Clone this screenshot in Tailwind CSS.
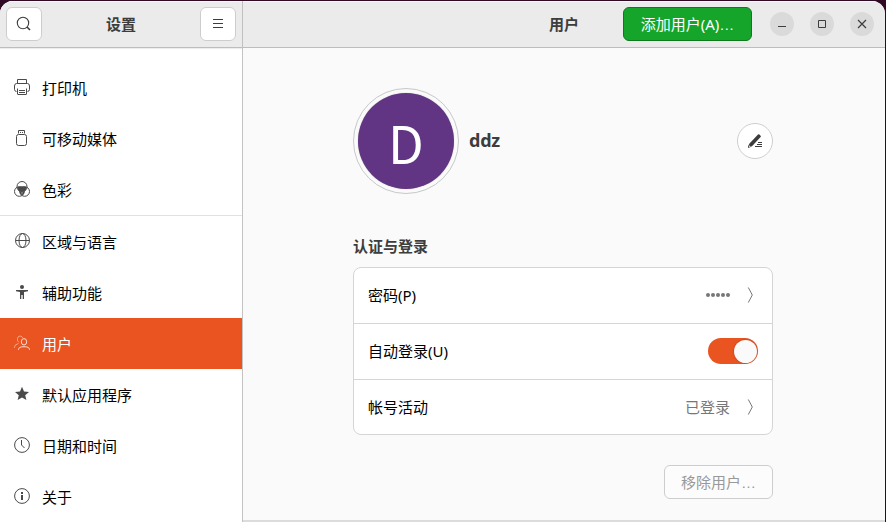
<!DOCTYPE html>
<html lang="zh-CN">
<head>
<meta charset="utf-8">
<title>设置</title>
<script src="https://cdn.jsdelivr.net/npm/@tailwindcss/browser@4"></script>
</head>
<body class="w-[886px] h-[522px] overflow-hidden bg-[#300a24] pt-px font-['Noto_Sans','Noto_Sans_CJK_SC',sans-serif] text-[15px] leading-[22px] text-black">
<div class="flex w-[885px] h-[521px] overflow-hidden rounded-t-[13px] bg-[#fafafa]">
  <aside class="flex w-[243px] shrink-0 flex-col border-r border-[#c3c3c3] bg-white">
    <header class="flex h-[47px] shrink-0 items-center justify-between border-b border-[#bdbdbd] bg-[#ebebeb] px-1.5 shadow-[inset_0_1px_0_#f8f8f8,0_1px_1px_#00000012]">
      <button class="flex h-[34px] w-9 items-center justify-center rounded-md border border-[#cdcdcd] bg-white">
        <svg width="16" height="16" viewBox="0 0 16 16" fill="none" stroke="#3d3d3d" stroke-width="1.1"><circle cx="7" cy="7" r="5.7"/><path d="M11 11l3 3" stroke-width="1.6"/></svg>
      </button>
      <h1 class="font-bold text-[#3d3d3d]">设置</h1>
      <button class="flex h-[34px] w-9 items-center justify-center rounded-md border border-[#cdcdcd] bg-white">
        <svg width="16" height="16" viewBox="0 0 16 16" stroke="#3d3d3d"><path d="M3 3.5h10M3 7.5h10M3 11.5h10"/></svg>
      </button>
    </header>
    <nav class="flex flex-col pt-3.5">
      <a class="flex h-[51px] items-center gap-3 px-3.5">
        <svg class="-mt-0.5" width="16" height="16" viewBox="0 0 16 16" fill="none" stroke="#4a4a4a"><path d="M3.500 4V.5h9V4M2.500 12.500Q.5 12.300 .5 10.500v-3.500Q.5 4.500 2.500 4.500h11q2 0 2 2.500v3.500q0 1.800-2 2M3.500 9.500v5.500q0 .5.5.5h8q.5 0 .5-.5V9.500M5 11.500h6M5 13.500h6"/></svg>
        <span>打印机</span></a>
      <a class="flex h-[51px] items-center gap-3 px-3.5">
        <svg class="-mt-0.5" width="16" height="16" viewBox="0 0 16 16" fill="none" stroke="#4a4a4a"><path d="M4.500 3.500v-3h6v3M6.500 2v1M8.500 2v1"/><rect x="2.500" y="4.500" width="10" height="11" rx="2"/></svg>
        <span>可移动媒体</span></a>
      <a class="flex h-[51px] items-center gap-3 px-3.5">
        <svg class="-mt-0.5" width="16" height="16" viewBox="0 0 16 16" fill="none" stroke="#4a4a4a"><path fill="#4a4a4a" stroke="none" d="M3.300 6.200Q8 4.500 12.700 6.200Q12.700 9 10.800 10.500Q10.500 13.500 8 14.500Q5.500 13.500 5.200 10.500Q3.300 9 3.300 6.200z"/><path d="M8 11v3M5.500 10L8 11l2.500-1" stroke="#aaa" stroke-width=".7"/><circle cx="8" cy="5.500" r="5"/><circle cx="5.300" cy="10.500" r="4.800"/><circle cx="10.700" cy="10.500" r="4.800"/></svg>
        <span>色彩</span></a>
      <hr class="border-[#e1e1e1]">
      <a class="flex h-[51px] items-center gap-3 px-3.5">
        <svg class="-mt-0.5" width="16" height="16" viewBox="0 0 16 16" fill="none" stroke="#4a4a4a"><circle cx="8.500" cy="7.500" r="7"/><ellipse cx="8.500" cy="7.500" rx="3.500" ry="7"/><path d="M1.500 7.500h14"/></svg>
        <span>区域与语言</span></a>
      <a class="flex h-[51px] items-center gap-3 px-3.5">
        <svg class="-mt-0.5" width="16" height="16" viewBox="0 0 16 16" fill="#4a4a4a"><circle cx="8" cy="3" r="2"/><path d="M2 6h12v1.200l-4 .8V15H8.700v-4H7.300v4H6V8l-4-.8z"/></svg>
        <span>辅助功能</span></a>
      <a class="flex h-[51px] items-center gap-3 bg-[#e95420] px-3.5 text-white">
        <svg class="-mt-0.5" width="16" height="16" viewBox="0 0 16 16" fill="none" stroke="#fff"><g opacity=".45"><path d="M4.700 7.300Q3 6 3.500 3.500Q4 1 6 1t2.800 2M.500 13v-1q0-2.500 4-3.500"/></g><g opacity=".8"><ellipse cx="10" cy="6.800" rx="2.700" ry="3.200"/><path d="M4.500 15v-.5q0-2.800 5.500-2.800t5.500 2.800v.5"/></g></svg>
        <span>用户</span></a>
      <a class="flex h-[51px] items-center gap-3 px-3.5">
        <svg class="-mt-0.5" width="16" height="16" viewBox="0 0 16 16" fill="#4a4a4a"><path d="M8 .8l2 4.700 5 .4-3.800 3.300L12.400 14 8 11.400 3.600 14l1.200-4.800L1 5.900l5-.4z"/></svg>
        <span>默认应用程序</span></a>
      <a class="flex h-[51px] items-center gap-3 px-3.5">
        <svg class="-mt-0.5" width="16" height="16" viewBox="0 0 16 16" fill="none" stroke="#4a4a4a"><circle cx="8" cy="8" r="7.400"/><path d="M7.500 3v5l3 3"/></svg>
        <span>日期和时间</span></a>
      <a class="flex h-[51px] items-center gap-3 px-3.5">
        <svg class="-mt-0.5" width="16" height="16" viewBox="0 0 16 16" fill="none" stroke="#4a4a4a"><circle cx="8" cy="8" r="7.400"/><path fill="#4a4a4a" stroke="none" d="M7 4h2v2H7zM7 7h2v5H7z"/></svg>
        <span>关于</span></a>
    </nav>
  </aside>

  <main class="flex flex-1 flex-col">
    <header class="flex h-[47px] shrink-0 items-center border-b border-[#bdbdbd] bg-[#ebebeb] pr-[11px] shadow-[inset_0_1px_0_#f8f8f8]">
      <h2 class="ml-[306px] w-[74px] font-bold text-[#3d3d3d]">用户</h2>
      <button class="h-[34px] w-[129px] rounded-md border border-[#0f7a1d] bg-[#15a52a] text-white">添加用户(A)<span class="font-['Liberation_Sans']">…</span></button>
      <div class="ml-auto flex gap-4">
        <button class="flex size-6 items-center justify-center rounded-full bg-[#dadada]"><svg width="16" height="16" viewBox="0 0 16 16" stroke="#3d3d3d"><path d="M4 10.500h8"/></svg></button>
        <button class="flex size-6 items-center justify-center rounded-full bg-[#dadada]"><svg width="16" height="16" viewBox="0 0 16 16" fill="none" stroke="#3d3d3d"><path d="M4.500 4.500h7v7h-7z"/></svg></button>
        <button class="flex size-6 items-center justify-center rounded-full bg-[#dadada]"><svg width="16" height="16" viewBox="0 0 16 16" stroke="#3d3d3d" stroke-width="1.200"><path d="M4 4l8 8M12 4l-8 8"/></svg></button>
      </div>
    </header>
    <div class="ml-[110px] flex w-[420px] flex-1 flex-col pt-10">
      <section class="flex items-center">
        <div class="flex size-[106px] items-center justify-center rounded-full border border-[#c8c8c8] bg-[#fafafa]">
          <div class="flex size-[96px] items-center justify-center rounded-full bg-[#613583] pt-0.5 font-['Noto_Sans_CJK_SC'] text-[52px] leading-none text-white shadow-[0_0_1px_#00000060]">D</div>
        </div>
        <span class="ml-2.5 pb-0.5 text-[18px] font-bold tracking-[-0.2px] text-[#3d3d3d]">ddz</span>
        <button class="ml-auto flex size-9 items-center justify-center rounded-full border border-[#cdcdcd] bg-white">
          <svg width="16" height="16" viewBox="0 0 16 16" fill="#3d3d3d"><path d="M11 1.500q.7-.7 1.400 0l1.200 1.200q.7.700 0 1.400L5.200 13Q3 14.500 1 15Q.7 13 2.500 10.500z"/><path d="M2.300 12.300l1.500 1.200-2 .8z" fill="#ddd"/><path d="M11 9h4v1h-4zM10 11h5v1h-5zM8 13h7v1H8z"/></svg>
        </button>
      </section>
      <h3 class="mt-[41px] font-bold text-[#3d3d3d]">认证与登录</h3>
      <section class="mt-2.5 flex h-[168px] flex-col rounded-lg border border-[#d5d5d5] bg-white">
        <div class="flex h-14 items-center border-b border-[#d5d5d5] px-3.5 pb-px">
          <span class="mr-auto">密码(P)</span>
          <span class="mr-3 flex gap-px"><i class="size-1 rounded-full bg-[#777]"></i><i class="size-1 rounded-full bg-[#777]"></i><i class="size-1 rounded-full bg-[#777]"></i><i class="size-1 rounded-full bg-[#777]"></i><i class="size-1 rounded-full bg-[#777]"></i></span>
          <svg width="16" height="16" viewBox="0 0 16 16" fill="none" stroke="#777"><path d="M6.300 0.500l4 7.500-4 7.500"/></svg>
        </div>
        <div class="flex h-14 items-center border-b border-[#d5d5d5] px-3.5 pb-px">
          <span class="mr-auto">自动登录(U)</span>
          <span class="flex h-[26px] w-[50px] items-center justify-end rounded-full bg-[#e95420] pr-[1.5px]"><i class="size-[23px] rounded-full bg-[#fafafa] shadow-[0_0_2px_#00000050]"></i></span>
        </div>
        <div class="flex h-[54px] items-center px-3.5">
          <span class="mr-auto">帐号活动</span>
          <span class="mr-3 text-[#777]">已登录</span>
          <svg width="16" height="16" viewBox="0 0 16 16" fill="none" stroke="#777"><path d="M6.300 0.500l4 7.500-4 7.500"/></svg>
        </div>
      </section>
      <button class="mt-[30px] h-[34px] w-[109px] self-end rounded-md border border-[#cdcdcd] bg-[#fcfcfc] text-[#999]">移除用户<span class="font-['Liberation_Sans']">…</span></button>
    </div>
    <div class="h-[2px] bg-[#dcdcdc]"></div>
  </main>
</div>
</body>
</html>
